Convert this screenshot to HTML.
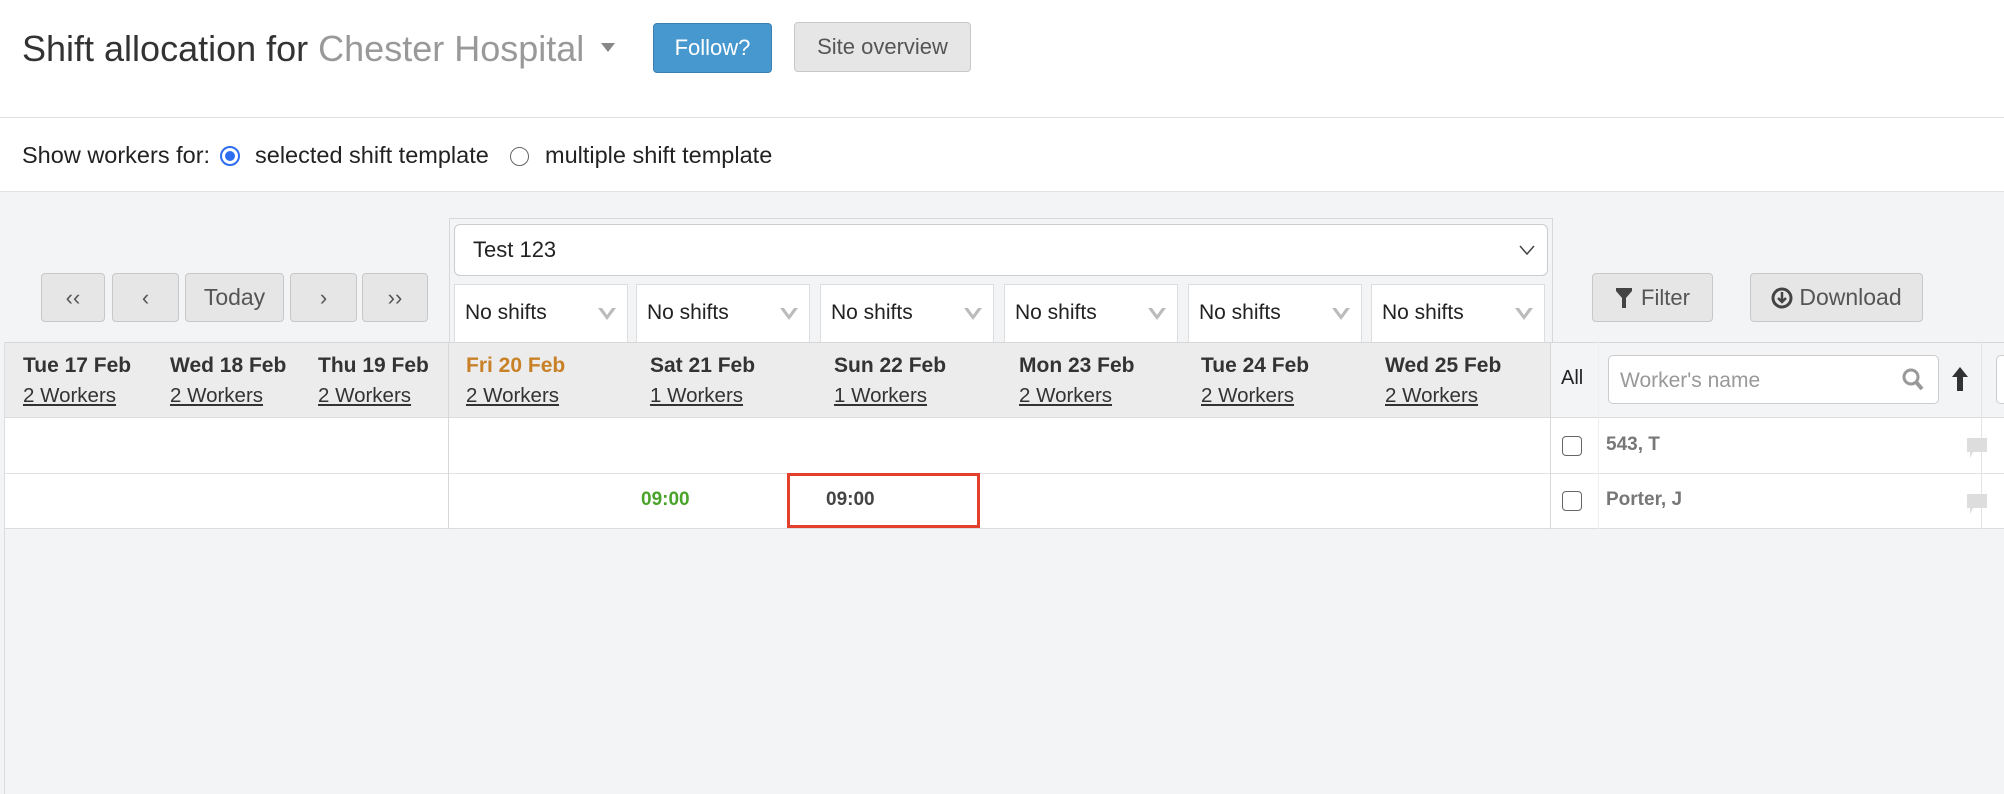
<!DOCTYPE html>
<html><head><meta charset="utf-8"><style>
*{box-sizing:border-box;margin:0;padding:0}
body{width:2004px;height:794px;overflow:hidden;background:#f3f4f6;font-family:"Liberation Sans",Arial,sans-serif;color:#333;position:relative}
.a{position:absolute}
.btn{position:absolute;background:#e6e6e6;border:1px solid #c8c8c8;border-radius:4px;color:#555;font-size:22px;display:flex;align-items:center;justify-content:center}
.ns{position:absolute;top:284px;height:58px;width:174px;background:#fff;border:1px solid #ddd;border-bottom:none;font-size:21px;color:#222;padding:16px 0 0 10px}
.ns svg{position:absolute;right:10px;top:22px}
.d{position:absolute;top:351px;font-size:21px;font-weight:bold;color:#333;line-height:30px;white-space:nowrap}
.d u{font-weight:normal;display:block;color:#333;font-size:20.5px}
</style></head><body>
<div class="a" style="left:0;top:0;width:2004px;height:192px;background:#fff"></div>
<div class="a" style="left:0;top:117px;width:2004px;height:1px;background:#e2e2e2"></div>
<div class="a" style="left:0;top:191px;width:2004px;height:1px;background:#e2e2e2"></div>
<div class="a" style="left:22px;top:28px;font-size:36px;color:#333;white-space:nowrap">Shift allocation for <span style="color:#999">Chester Hospital</span></div>
<svg class="a" style="left:601px;top:43px" width="14" height="9"><path d="M0 0H14L7 9Z" fill="#888"/></svg>
<div class="btn" style="left:653px;top:23px;width:119px;height:50px;background:#4898d0;border-color:#3a7fb0;color:#fff">Follow?</div>
<div class="btn" style="left:794px;top:22px;width:177px;height:50px">Site overview</div>
<div class="a" style="left:22px;top:142px;font-size:23.5px;color:#222;white-space:nowrap">Show workers for:</div>
<div class="a" style="left:220px;top:146px;width:20px;height:20px;border-radius:50%;border:2px solid #2d6ef0;background:#fff"><div style="margin:3px;width:10px;height:10px;border-radius:50%;background:#2d6ef0"></div></div>
<div class="a" style="left:255px;top:142px;font-size:23.5px;color:#222;white-space:nowrap">selected shift template</div>
<div class="a" style="left:510px;top:147px;width:19px;height:19px;border-radius:50%;border:1px solid #666;background:#fff"></div>
<div class="a" style="left:545px;top:142px;font-size:23.5px;color:#222;white-space:nowrap">multiple shift template</div>

<div class="btn" style="left:41px;top:273px;width:64px;height:49px">&#x2039;&#x2039;</div>
<div class="btn" style="left:112px;top:273px;width:67px;height:49px">&#x2039;</div>
<div class="btn" style="left:185px;top:273px;width:99px;height:49px;font-size:23px">Today</div>
<div class="btn" style="left:290px;top:273px;width:67px;height:49px">&#x203A;</div>
<div class="btn" style="left:362px;top:273px;width:66px;height:49px">&#x203A;&#x203A;</div>

<div class="a" style="left:449px;top:218px;width:1104px;height:125px;border:1px solid #d8d8d8;background:#f3f4f6"></div>
<div class="a" style="left:454px;top:224px;width:1094px;height:52px;background:#fff;border:1px solid #ccc;border-radius:6px;font-size:22px;color:#222;padding:12px 0 0 18px">Test 123
<svg style="position:absolute;right:12px;top:20px" width="16" height="10"><path d="M1 1L8 9L15 1" fill="none" stroke="#444" stroke-width="1.5"/></svg></div>
<div class="ns" style="left:454px">No shifts<svg width="20" height="14"><path d="M1 1L10 13L19 1L15 1L10 8L5 1Z" fill="#bbb"/></svg></div>
<div class="ns" style="left:636px">No shifts<svg width="20" height="14"><path d="M1 1L10 13L19 1L15 1L10 8L5 1Z" fill="#bbb"/></svg></div>
<div class="ns" style="left:820px">No shifts<svg width="20" height="14"><path d="M1 1L10 13L19 1L15 1L10 8L5 1Z" fill="#bbb"/></svg></div>
<div class="ns" style="left:1004px">No shifts<svg width="20" height="14"><path d="M1 1L10 13L19 1L15 1L10 8L5 1Z" fill="#bbb"/></svg></div>
<div class="ns" style="left:1188px">No shifts<svg width="20" height="14"><path d="M1 1L10 13L19 1L15 1L10 8L5 1Z" fill="#bbb"/></svg></div>
<div class="ns" style="left:1371px">No shifts<svg width="20" height="14"><path d="M1 1L10 13L19 1L15 1L10 8L5 1Z" fill="#bbb"/></svg></div>

<div class="btn" style="left:1592px;top:273px;width:121px;height:49px"><svg width="18" height="22" style="margin-right:8px"><path d="M1 1H17V4L11 11V21L7 21V11L1 4Z" fill="#444"/></svg>Filter</div>
<div class="btn" style="left:1750px;top:273px;width:173px;height:49px;font-size:23px"><svg width="22" height="22" style="margin-right:6px"><circle cx="11" cy="11" r="9" fill="none" stroke="#444" stroke-width="3"/><path d="M11 5V14M7 11L11 15L15 11" stroke="#444" stroke-width="2.5" fill="none"/></svg>Download</div>

<!-- table -->
<div class="a" style="left:5px;top:342px;width:1999px;height:187px;background:#fff"></div>
<div class="a" style="left:4px;top:342px;width:1px;height:452px;background:#ddd"></div>
<div class="a" style="left:5px;top:342px;width:1546px;height:76px;background:#ececec;border-top:1px solid #d8d8d8;border-bottom:1px solid #ddd"></div>
<div class="a" style="left:1551px;top:342px;width:453px;height:76px;background:#f3f4f6;border-top:1px solid #d8d8d8;border-bottom:1px solid #ddd"></div>
<div class="a" style="left:5px;top:473px;width:1999px;height:1px;background:#e3e3e3"></div>
<div class="a" style="left:5px;top:528px;width:1999px;height:1px;background:#ddd"></div>
<div class="a" style="left:448px;top:342px;width:1px;height:187px;background:#d8d8d8"></div>
<div class="a" style="left:1550px;top:342px;width:1px;height:187px;background:#d8d8d8"></div>
<div class="a" style="left:1598px;top:342px;width:1px;height:187px;background:#eee"></div>
<div class="a" style="left:1981px;top:342px;width:1px;height:187px;background:#e3e3e3"></div>

<div class="d" style="left:23px">Tue 17 Feb<u>2 Workers</u></div>
<div class="d" style="left:170px">Wed 18 Feb<u>2 Workers</u></div>
<div class="d" style="left:318px">Thu 19 Feb<u>2 Workers</u></div>
<div class="d" style="left:466px;color:#c98127">Fri 20 Feb<u>2 Workers</u></div>
<div class="d" style="left:650px">Sat 21 Feb<u>1 Workers</u></div>
<div class="d" style="left:834px">Sun 22 Feb<u>1 Workers</u></div>
<div class="d" style="left:1019px">Mon 23 Feb<u>2 Workers</u></div>
<div class="d" style="left:1201px">Tue 24 Feb<u>2 Workers</u></div>
<div class="d" style="left:1385px">Wed 25 Feb<u>2 Workers</u></div>

<div class="a" style="left:1561px;top:367px;font-size:20px;color:#222">All</div>
<div class="a" style="left:1608px;top:355px;width:331px;height:49px;background:#fff;border:1px solid #ccc;border-radius:5px;font-size:21px;color:#999;padding:13px 0 0 11px">Worker's name
<svg style="position:absolute;right:14px;top:12px" width="22" height="24"><circle cx="9" cy="9" r="7" fill="none" stroke="#999" stroke-width="3"/><path d="M14 14L20 21" stroke="#999" stroke-width="4"/></svg></div>
<svg class="a" style="left:1951px;top:366px" width="18" height="26"><path d="M9 1L17 11H12V25H6V11H1Z" fill="#333"/></svg>
<div class="a" style="left:1996px;top:355px;width:12px;height:49px;border:1px solid #ccc;border-radius:5px;background:#fff"></div>

<div class="a" style="left:1562px;top:436px;width:20px;height:20px;border:1.5px solid #666;border-radius:4px;background:#fff"></div>
<div class="a" style="left:1606px;top:434px;font-size:19px;font-weight:bold;color:#777">543, T</div>
<div class="a" style="left:1562px;top:491px;width:20px;height:20px;border:1.5px solid #666;border-radius:4px;background:#fff"></div>
<div class="a" style="left:1606px;top:489px;font-size:19px;font-weight:bold;color:#777">Porter, J</div>
<svg class="a" style="left:1966px;top:437px" width="22" height="22"><path d="M1 1H21V15H7L4 21V15H1Z" fill="#ddd"/></svg>
<svg class="a" style="left:1966px;top:493px" width="22" height="22"><path d="M1 1H21V15H7L4 21V15H1Z" fill="#ddd"/></svg>

<div class="a" style="left:641px;top:489px;font-size:19px;font-weight:bold;color:#4aa32a">09:00</div>
<div class="a" style="left:787px;top:473px;width:193px;height:55px;border:3px solid #e2402a"></div>
<div class="a" style="left:826px;top:489px;font-size:19px;font-weight:bold;color:#444">09:00</div>
</body></html>
